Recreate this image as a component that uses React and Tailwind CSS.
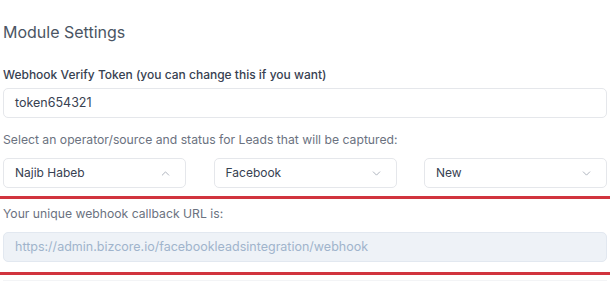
import { ChevronDown, ChevronUp } from 'lucide-react';

const selects = [
  { value: 'Najib Habeb', open: true },
  { value: 'Facebook', open: false },
  { value: 'New', open: false },
];

function SelectBox({ value, open }) {
  const Icon = open ? ChevronUp : ChevronDown;
  return (
    <div className="flex h-[30px] w-[183px] items-center justify-between rounded-[5px] border border-[#e5e7eb] bg-white pl-[11px] pr-[13px] text-[12px] text-[#374151]">
      <span>{value}</span>
      <Icon className="h-[13px] w-[13px] text-[#9ca3af]" strokeWidth={1.5} />
    </div>
  );
}

export default function App() {
  return (
    <div className="min-h-[300px] w-[610px] bg-white px-[3px] pt-[20px] font-['Inter',sans-serif]">
      <h2 className="text-[16px] leading-[24px] text-[#4b5563]">Module Settings</h2>

      <label className="mt-[21px] block text-[12px] font-medium leading-[20px] text-[#374151]">
        Webhook Verify Token (you can change this if you want)
      </label>
      <div className="mt-[3px] flex h-[30px] items-center rounded-[5px] border border-[#e5e7eb] bg-white px-[11px] text-[12.5px] text-[#374151]">
        token654321
      </div>

      <p className="mt-[12px] text-[12.2px] leading-[20px] text-[#6b7280]">
        Select an operator/source and status for Leads that will be captured:
      </p>
      <div className="mt-[8px] flex justify-between">
        {selects.map((s) => (
          <SelectBox key={s.value} {...s} />
        ))}
      </div>

      <div className="-mx-[3px] mt-[8px] border-y-[3px] border-[#d1343e] px-[3px] pb-[10px] pt-[5px]">
        <p className="text-[12.2px] leading-[20px] text-[#6b7280]">Your unique webhook callback URL is:</p>
        <div className="mt-[8px] flex h-[30px] items-center rounded-[5px] border border-[#e2e8f0] bg-[#eef2f7] px-[11px] text-[12.5px] text-[#a0b4cc]">
          https://admin.bizcore.io/facebookleadsintegration/webhook
        </div>
      </div>
      <div className="mt-[5px] border-t border-[#f3f4f6]" />
    </div>
  );
}
